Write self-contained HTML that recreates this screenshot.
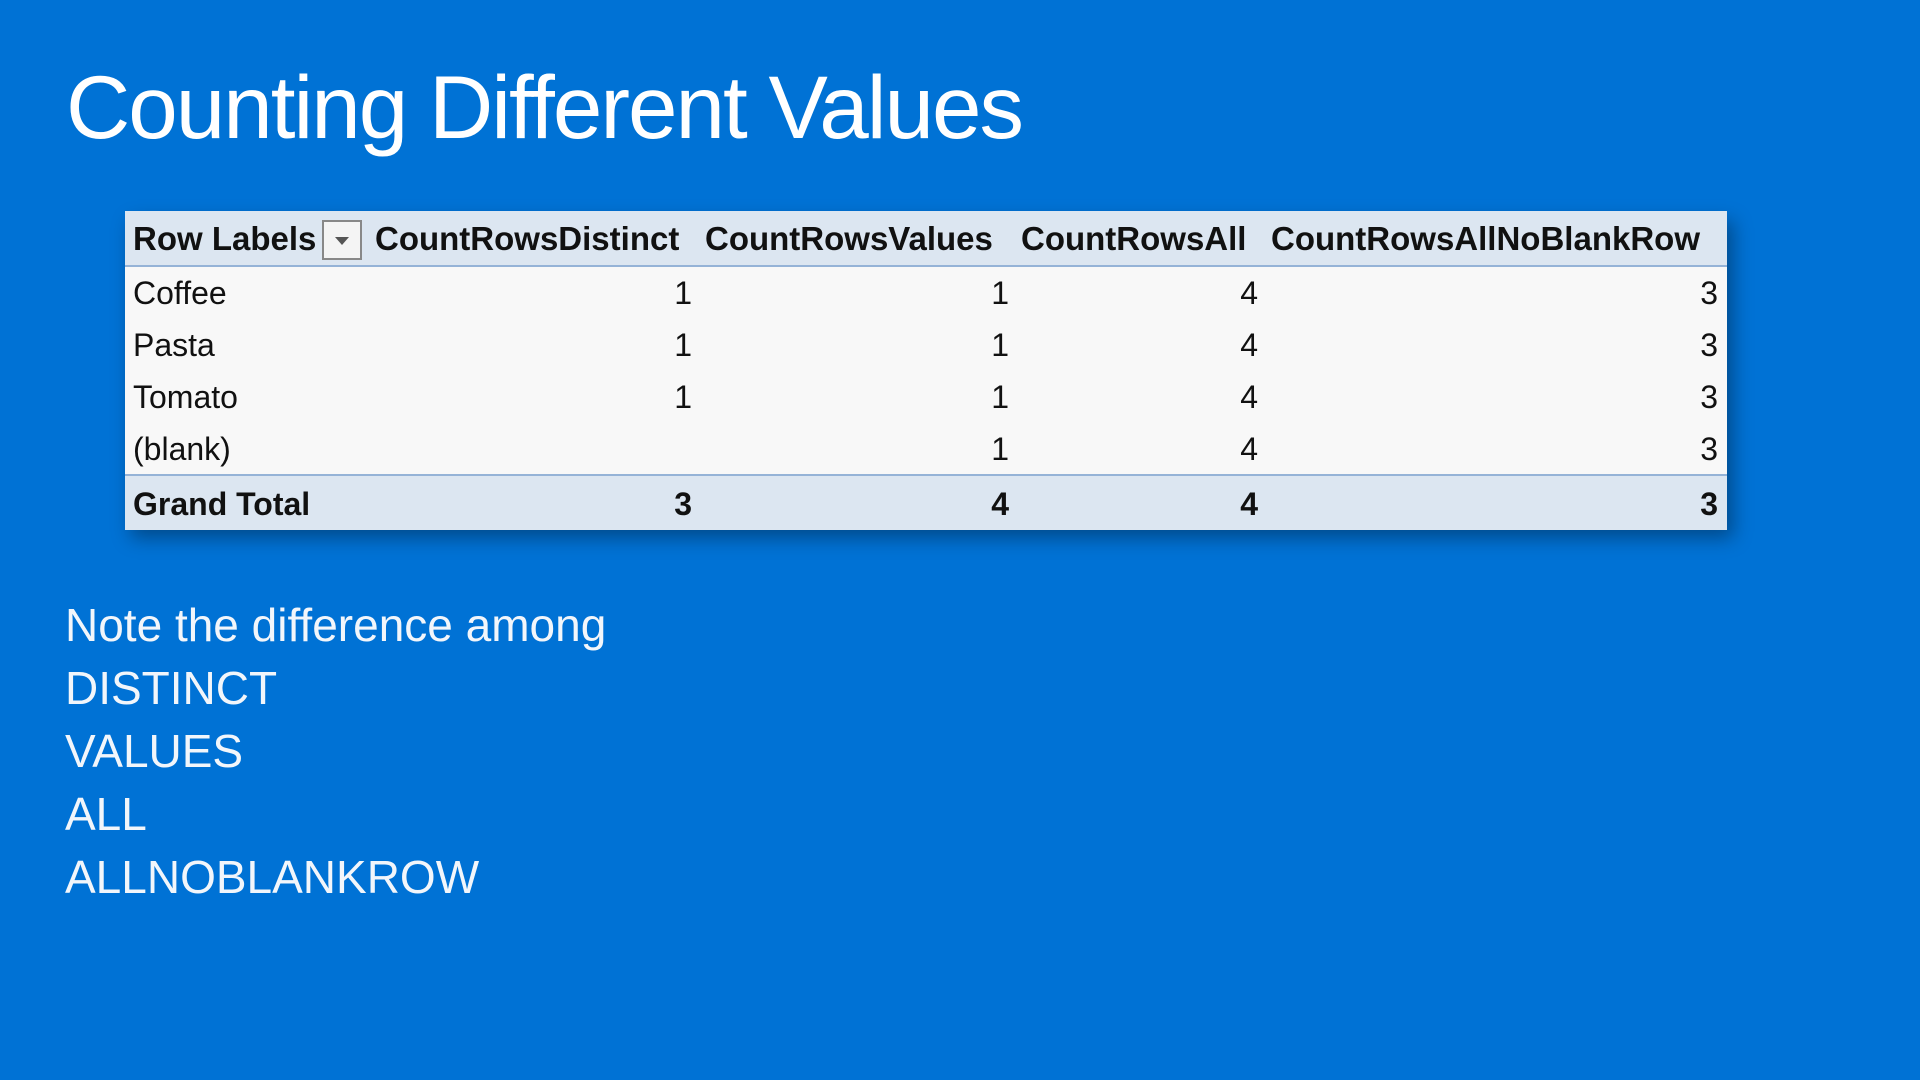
<!DOCTYPE html>
<html><head><style>
body{margin:0;width:1920px;height:1080px;background:#0072D5;overflow:hidden;font-family:"Liberation Sans",sans-serif;position:relative}
.t{position:absolute;color:#fff;white-space:nowrap}
#title{left:66px;top:56px;font-size:89px;letter-spacing:-2px}
.n{left:65px;font-size:46px;color:#f2f6fb}
#tbl{position:absolute;left:125px;top:211px;width:1602px;height:317px;background:#f8f8f8;box-shadow:6px 10px 18px rgba(0,0,0,.35)}
.r{position:absolute;left:0;width:1602px;height:52px}
.c{position:absolute;top:2px;line-height:52px;font-size:32px;color:#111;white-space:nowrap}
.b{font-weight:bold}
.h{font-size:33px}
.rt{text-align:right}
</style></head><body>
<div class="t" id="title">Counting Different Values</div>
<div id="tbl">
 <div class="r" style="top:0;background:#dce6f1;height:54px;border-bottom:2px solid #95b3d7">
  <div class="c b h" style="left:8px">Row Labels</div>
  <div style="position:absolute;left:197px;top:9px;width:40px;height:40px;border:2px solid #888;background:#f4f4f4;box-sizing:border-box"><div style="position:absolute;left:11px;top:15px;border-left:7px solid transparent;border-right:7px solid transparent;border-top:8px solid #555"></div></div>
  <div class="c b h" style="left:250px">CountRowsDistinct</div>
  <div class="c b h" style="left:580px">CountRowsValues</div>
  <div class="c b h" style="left:896px">CountRowsAll</div>
  <div class="c b h" style="left:1146px">CountRowsAllNoBlankRow</div>
 </div>
 <div class="r" style="top:54px"><div class="c" style="left:8px">Coffee</div><div class="c rt" style="right:1035px">1</div><div class="c rt" style="right:718px">1</div><div class="c rt" style="right:469px">4</div><div class="c rt" style="right:9px">3</div></div>
 <div class="r" style="top:106px"><div class="c" style="left:8px">Pasta</div><div class="c rt" style="right:1035px">1</div><div class="c rt" style="right:718px">1</div><div class="c rt" style="right:469px">4</div><div class="c rt" style="right:9px">3</div></div>
 <div class="r" style="top:158px"><div class="c" style="left:8px">Tomato</div><div class="c rt" style="right:1035px">1</div><div class="c rt" style="right:718px">1</div><div class="c rt" style="right:469px">4</div><div class="c rt" style="right:9px">3</div></div>
 <div class="r" style="top:210px"><div class="c" style="left:8px">(blank)</div><div class="c rt" style="right:718px">1</div><div class="c rt" style="right:469px">4</div><div class="c rt" style="right:9px">3</div></div>
 <div class="r" style="top:263px;height:54px;background:#dce6f1;border-top:2px solid #95b3d7"><div class="c b" style="left:8px">Grand Total</div><div class="c b rt" style="right:1035px">3</div><div class="c b rt" style="right:718px">4</div><div class="c b rt" style="right:469px">4</div><div class="c b rt" style="right:9px">3</div></div>
</div>
<div class="t n" style="top:598px">Note the difference among</div>
<div class="t n" style="top:661px">DISTINCT</div>
<div class="t n" style="top:724px">VALUES</div>
<div class="t n" style="top:787px">ALL</div>
<div class="t n" style="top:850px">ALLNOBLANKROW</div>
</body></html>
